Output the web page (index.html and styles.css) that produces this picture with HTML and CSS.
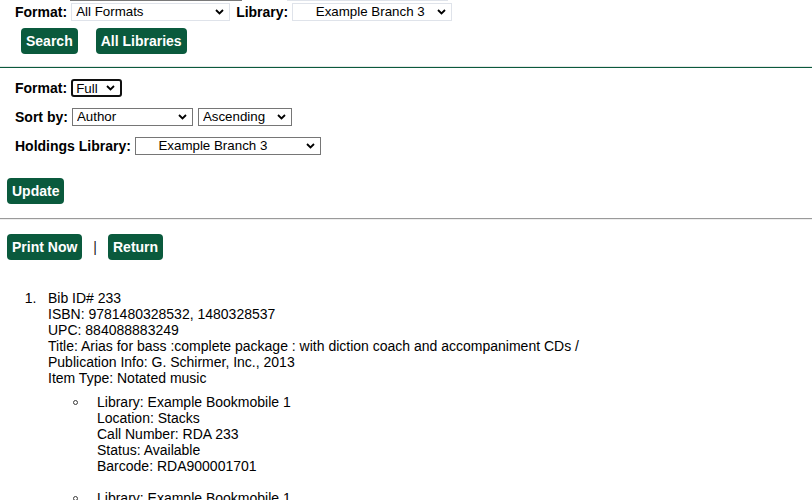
FILE: index.html
```html
<!DOCTYPE html>
<html lang="en">
<head>
<meta charset="utf-8">
<title>Print Results</title>
<link rel="stylesheet" href="styles.css">
</head>
<body>
<div class="prev"><span class="prev-a"></span><span class="prev-b"></span></div>
<form class="search">
  <div class="row">
    <label class="lbl">Format:</label>
    <select class="sel sel-light w-format"><option>All Formats</option></select>
    <label class="lbl lbl-lib">Library:</label>
    <select class="sel sel-light w-lib"><option>&nbsp;&nbsp;&nbsp;&nbsp;&nbsp;Example Branch 3</option></select>
  </div>
  <div class="btns">
    <button type="button" class="btn">Search</button>
    <button type="button" class="btn">All Libraries</button>
  </div>
</form>
<div class="rule-green"></div>
<form class="opts">
  <div class="row">
    <label class="lbl">Format:</label>
    <select class="sel sel-focus w-full"><option>Full</option></select>
  </div>
  <div class="row">
    <label class="lbl">Sort by:</label>
    <select class="sel w-author"><option>Author</option></select>
    <select class="sel w-asc"><option>Ascending</option></select>
  </div>
  <div class="row">
    <label class="lbl">Holdings Library:</label>
    <select class="sel w-hold"><option>&nbsp;&nbsp;&nbsp;&nbsp;&nbsp;Example Branch 3</option></select>
  </div>
  <button type="button" class="btn btn-update">Update</button>
</form>
<div class="rule-gray"></div>
<div class="printbar">
  <button type="button" class="btn">Print Now</button>
  <span class="sep">|</span>
  <button type="button" class="btn">Return</button>
</div>
<ol class="results">
  <li>Bib ID# 233<br>
    ISBN: 9781480328532, 1480328537<br>
    UPC: 884088883249<br>
    Title: Arias for bass :complete package : with diction coach and accompaniment CDs /<br>
    Publication Info: G. Schirmer, Inc., 2013<br>
    Item Type: Notated music
    <ul class="holdings">
      <li>Library: Example Bookmobile 1<br>
        Location: Stacks<br>
        Call Number: RDA 233<br>
        Status: Available<br>
        Barcode: RDA900001701</li>
      <li>Library: Example Bookmobile 1<br>
        Location: Stacks<br>
        Call Number: RDA 233<br>
        Status: Available<br>
        Barcode: RDA900001702</li>
    </ul>
  </li>
</ol>
</body>
</html>
```
FILE: styles.css
```css
html, body {
  margin: 0;
  padding: 0;
  background: #ffffff;
  color: #000000;
  font-family: "Liberation Sans", Arial, sans-serif;
  font-size: 14px;
}

.prev {
  display: flex;
  height: 1px;
}
.prev-a {
  margin-left: 70px;
  width: 172px;
  height: 0;
  border-bottom: 1px solid #7a7a7a;
}
.prev-b {
  margin-left: 45px;
  width: 161px;
  height: 0;
  border-bottom: 1px solid #dfe3ea;
}

.row {
  display: flex;
  align-items: center;
  height: 18px;
}

.lbl {
  font-weight: bold;
  font-size: 14px;
  margin-right: 4px;
  white-space: nowrap;
}
.lbl-lib {
  margin-left: 6px;
}

.sel {
  appearance: none;
  -webkit-appearance: none;
  box-sizing: border-box;
  height: 18px;
  margin: 0;
  padding: 0 14px 0 4px;
  border: 1px solid #767676;
  border-radius: 0;
  background-color: #ffffff;
  background-image: url("data:image/svg+xml,%3Csvg xmlns='http://www.w3.org/2000/svg' width='9' height='6' viewBox='0 0 9 6'%3E%3Cpath d='M1 1l3.5 3.5L8 1' fill='none' stroke='%23000' stroke-width='1.8'/%3E%3C/svg%3E");
  background-repeat: no-repeat;
  background-position: right 5px center;
  color: #000000;
  font-family: "Liberation Sans", Arial, sans-serif;
  font-size: 13.33px;
  line-height: 16px;
}
.sel-light {
  border-color: #dfe3ea;
}
.sel-focus {
  border: 2px solid #101010;
  border-radius: 3px;
  padding-left: 3px;
}

.w-format { width: 159px; }
.w-lib { width: 160px; }
.w-full { width: 51px; }
.w-author { width: 121px; }
.w-asc { width: 94px; margin-left: 5px; }
.w-hold { width: 186px; }

.search {
  margin: 2px 0 0 15px;
}
.btns {
  display: flex;
  gap: 18px;
  margin: 7px 0 0 6px;
}

.btn {
  box-sizing: border-box;
  height: 26px;
  margin: 0;
  padding: 0 5px;
  border: none;
  border-radius: 4px;
  background: #0a5a3d;
  color: #ffffff;
  font-family: "Liberation Sans", Arial, sans-serif;
  font-size: 14px;
  font-weight: bold;
  line-height: 26px;
}

.rule-green {
  margin-top: 12px;
  height: 0;
  border-top: 1px solid #e3e7e5;
  border-bottom: 1px solid #0a5a3d;
}

.opts {
  display: flex;
  flex-direction: column;
  align-items: flex-start;
  gap: 11px;
  padding: 11px 0 0 15px;
}
.btn-update {
  margin: 12px 0 0 -8px;
}

.rule-gray {
  margin-top: 14px;
  height: 0;
  border-top: 1px solid #9a9a9a;
  border-bottom: 1px solid #eeeeee;
}

.printbar {
  display: flex;
  align-items: center;
  margin: 14px 0 0 7px;
}
.sep {
  padding: 0 11px;
  color: #222222;
}

.results {
  margin: 30px 0 0 8px;
  padding-left: 40px;
  line-height: 16px;
}
.results > li::marker {
  content: counter(list-item) ".   ";
}
.holdings {
  margin: 8px 0 0 0;
  padding-left: 49px;
  list-style: none;
}
.holdings li {
  margin-bottom: 16px;
}
.holdings li::before {
  content: "";
  display: inline-block;
  box-sizing: border-box;
  width: 5px;
  height: 5px;
  margin-left: -24px;
  margin-right: 19px;
  border: 1px solid #3a3a3a;
  border-radius: 50%;
  vertical-align: 2px;
}
```
